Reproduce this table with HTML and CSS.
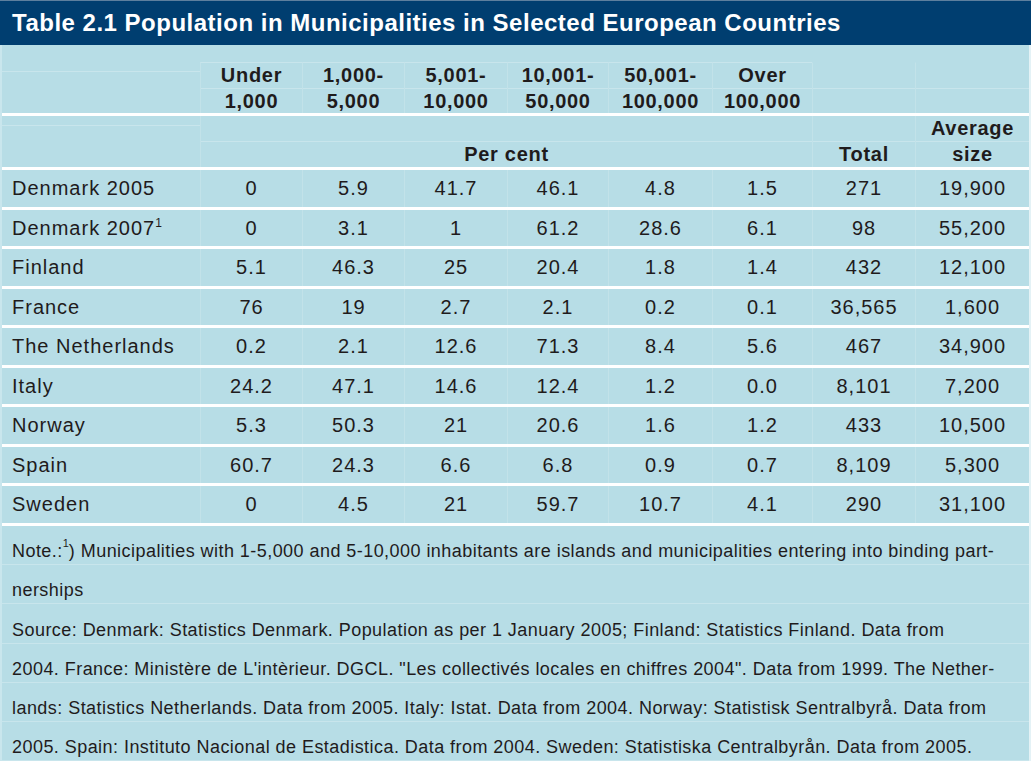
FILE: index.html
```html
<!DOCTYPE html>
<html lang="en">
<head>
<meta charset="utf-8">
<title>Table 2.1 Population in Municipalities</title>
<link rel="stylesheet" href="styles.css">
</head>
<body>
<div class="page">
  <div class="title">Table 2.1 Population in Municipalities in Selected European Countries</div>
  <div class="table">
    <div class="grid head1">
      <div class="first"></div>
      <div class="hc"><span class="ln">Under</span><span class="ln">1,000</span></div>
      <div class="hc"><span class="ln">1,000-</span><span class="ln">5,000</span></div>
      <div class="hc"><span class="ln">5,001-</span><span class="ln">10,000</span></div>
      <div class="hc"><span class="ln">10,001-</span><span class="ln">50,000</span></div>
      <div class="hc"><span class="ln">50,001-</span><span class="ln">100,000</span></div>
      <div class="hc"><span class="ln">Over</span><span class="ln">100,000</span></div>
      <div class="hc open"><span class="ln"></span><span class="ln"></span></div>
      <div class="hc open"><span class="ln"></span><span class="ln"></span></div>
    </div>
    <div class="grid head2">
      <div class="first"></div>
      <div class="hc percent"><span class="ln"></span><span class="ln">Per cent</span></div>
      <div class="hc"><span class="ln"></span><span class="ln">Total</span></div>
      <div class="hc"><span class="ln">Average</span><span class="ln">size</span></div>
    </div>
    <div class="grid row"><div class="name">Denmark 2005</div><div class="v">0</div><div class="v">5.9</div><div class="v">41.7</div><div class="v">46.1</div><div class="v">4.8</div><div class="v">1.5</div><div class="v">271</div><div class="v">19,900</div></div>
    <div class="grid row"><div class="name">Denmark 2007<sup class="sup">1</sup></div><div class="v">0</div><div class="v">3.1</div><div class="v">1</div><div class="v">61.2</div><div class="v">28.6</div><div class="v">6.1</div><div class="v">98</div><div class="v">55,200</div></div>
    <div class="grid row"><div class="name">Finland</div><div class="v">5.1</div><div class="v">46.3</div><div class="v">25</div><div class="v">20.4</div><div class="v">1.8</div><div class="v">1.4</div><div class="v">432</div><div class="v">12,100</div></div>
    <div class="grid row"><div class="name">France</div><div class="v">76</div><div class="v">19</div><div class="v">2.7</div><div class="v">2.1</div><div class="v">0.2</div><div class="v">0.1</div><div class="v">36,565</div><div class="v">1,600</div></div>
    <div class="grid row"><div class="name">The Netherlands</div><div class="v">0.2</div><div class="v">2.1</div><div class="v">12.6</div><div class="v">71.3</div><div class="v">8.4</div><div class="v">5.6</div><div class="v">467</div><div class="v">34,900</div></div>
    <div class="grid row"><div class="name">Italy</div><div class="v">24.2</div><div class="v">47.1</div><div class="v">14.6</div><div class="v">12.4</div><div class="v">1.2</div><div class="v">0.0</div><div class="v">8,101</div><div class="v">7,200</div></div>
    <div class="grid row"><div class="name">Norway</div><div class="v">5.3</div><div class="v">50.3</div><div class="v">21</div><div class="v">20.6</div><div class="v">1.6</div><div class="v">1.2</div><div class="v">433</div><div class="v">10,500</div></div>
    <div class="grid row"><div class="name">Spain</div><div class="v">60.7</div><div class="v">24.3</div><div class="v">6.6</div><div class="v">6.8</div><div class="v">0.9</div><div class="v">0.7</div><div class="v">8,109</div><div class="v">5,300</div></div>
    <div class="grid row"><div class="name">Sweden</div><div class="v">0</div><div class="v">4.5</div><div class="v">21</div><div class="v">59.7</div><div class="v">10.7</div><div class="v">4.1</div><div class="v">290</div><div class="v">31,100</div></div>
  </div>
  <div class="notes">
    <div class="nl">Note.:<sup class="nsup">1</sup>) Municipalities with 1-5,000 and 5-10,000 inhabitants are islands and municipalities entering into binding part-</div>
    <div class="nl">nerships</div>
    <div class="nl">Source: Denmark: Statistics Denmark. Population as per 1 January 2005; Finland: Statistics Finland. Data from</div>
    <div class="nl">2004. France: Ministère de L'intèrieur. DGCL. "Les collectivés locales en chiffres 2004". Data from 1999. The Nether-</div>
    <div class="nl">lands: Statistics Netherlands. Data from 2005. Italy: Istat. Data from 2004. Norway: Statistisk Sentralbyrå. Data from</div>
    <div class="nl">2005. Spain: Instituto Nacional de Estadistica. Data from 2004. Sweden: Statistiska Centralbyrån. Data from 2005.</div>
  </div>
</div>
</body>
</html>
```

FILE: styles.css
```css
html, body {
  margin: 0;
  padding: 0;
}

body {
  background: #b7dde6;
  color: #1f1b1c;
  font-family: "Liberation Sans", Arial, Helvetica, sans-serif;
}

.page {
  width: 1031px;
  height: 761px;
  overflow: hidden;
}

.title {
  height: 44px;
  border-top: 1px solid #5d7f9e;
  background: #003e70;
  color: #ffffff;
  font-weight: bold;
  font-size: 24px;
  letter-spacing: 0.5px;
  line-height: 44px;
  padding-left: 12px;
  white-space: nowrap;
}

.table,
.notes {
  border-left: 2px solid #c9e6ed;
  border-right: 2px solid #e4f2f6;
}

.grid {
  display: grid;
  grid-template-columns: 198px 102px 102px 103px 101px 104px 100px 103px 1fr;
}

/* header row 1 */
.head1 {
  height: 68px;
  border-bottom: 3px solid #ffffff;
}

.head1 .first {
  margin-top: 26px;
  border-top: 1px solid #c8e5ec;
}

.hc {
  display: flex;
  flex-direction: column;
  border-left: 1px solid #c2e2e9;
}

.head1 .hc {
  margin-top: 17px;
  border-top: 1px solid #c8e5ec;
}

.head1 .hc.open {
  border-top-color: transparent;
}

.ln {
  display: block;
  height: 25px;
  line-height: 25px;
  text-align: center;
  font-weight: bold;
  font-size: 20px;
  letter-spacing: 0.7px;
  white-space: nowrap;
}

.ln + .ln {
  border-top: 1px solid #c8e5ec;
}

.head1 .ln + .ln {
  height: 24px;
  line-height: 24px;
}

/* header row 2 */
.head2 {
  height: 51px;
  border-bottom: 3px solid #ffffff;
}

.head2 .first {
  margin-top: 9px;
  border-top: 1px solid #c8e5ec;
}

.percent {
  grid-column: span 6;
}

/* data rows */
.row {
  height: 36.5px;
  border-bottom: 3px solid #ffffff;
  font-size: 20px;
  letter-spacing: 1px;
  line-height: 36.5px;
}

.name {
  padding-left: 10px;
  white-space: nowrap;
}

.v {
  text-align: center;
  border-left: 1px solid #c2e2e9;
  white-space: nowrap;
}

.sup {
  font-size: 12px;
  line-height: 0;
  vertical-align: 8px;
  letter-spacing: 0;
}

/* notes */
.nl {
  box-sizing: border-box;
  height: 39.25px;
  border-bottom: 1px solid #c8e5ec;
  display: flex;
  align-items: flex-end;
  padding-left: 10px;
  padding-bottom: 3px;
  font-size: 18px;
  letter-spacing: 0.45px;
  line-height: 20px;
  white-space: nowrap;
}

.nl:first-child {
  height: 39.5px;
}

.nsup {
  font-size: 11px;
  line-height: 0;
  align-self: flex-start;
  margin-top: 17px;
  letter-spacing: 0;
}
```
